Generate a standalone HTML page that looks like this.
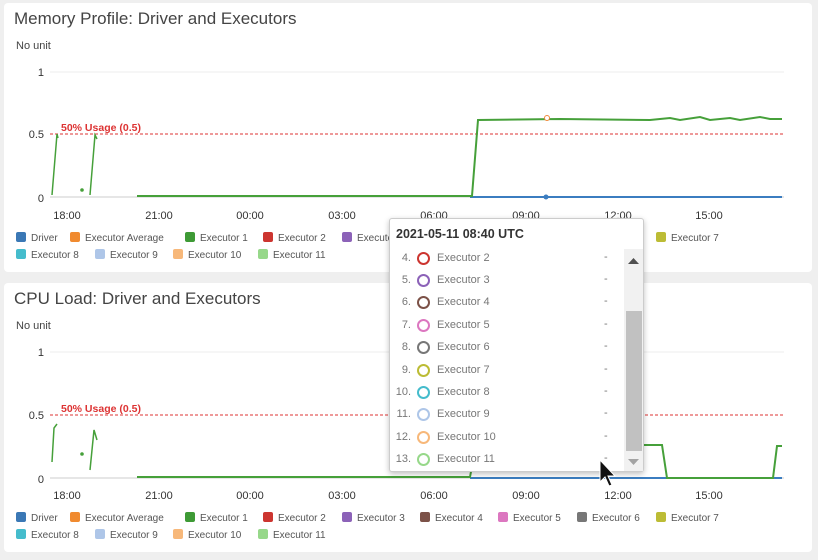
<!DOCTYPE html>
<html><head><meta charset="utf-8"><style>
*{margin:0;padding:0;box-sizing:border-box}
body{width:818px;height:560px;background:#efefef;font-family:"Liberation Sans",sans-serif;position:relative;overflow:hidden}
.panel{position:absolute;left:4px;width:808px;background:#fff;border-radius:4px}
.title{position:absolute;left:10px;font-size:17px;color:#444}
svg{position:absolute;left:0;top:0}
.tip{position:absolute;left:389px;top:218px;width:255px;height:254px;background:#fff;border:1px solid #ccc;border-radius:3px;box-shadow:0 2px 6px rgba(0,0,0,.25)}
.tip h4{position:absolute;left:6px;top:8px;font-size:12.5px;color:#333}
.row{position:absolute;left:0;width:235px;height:22px;font-size:11px;color:#777}
.row .n{position:absolute;right:214px;top:4px}
.row .c{position:absolute;left:27px;top:4px;width:13px;height:13px;border-radius:50%;border:2.5px solid}
.row .l{position:absolute;left:47px;top:4px}
.row .d{position:absolute;left:214px;top:3px}
.sb{position:absolute;left:234px;top:30px;width:19px;height:222px;background:#f1f1f1}
.th{position:absolute;left:2px;top:62px;width:16px;height:140px;background:#c1c1c1}
</style></head><body>
<div class="panel" style="top:3px;height:269px"></div>
<div class="panel" style="top:283px;height:269px"></div>
<div class="title" style="left:14px;top:9px">Memory Profile: Driver and Executors</div>
<div class="title" style="left:14px;top:289px">CPU Load: Driver and Executors</div>
<svg width="818" height="560" font-family="Liberation Sans, sans-serif">
<g id="c1">
<text x="16" y="49" font-size="11" fill="#444">No unit</text>
<line x1="50" y1="72" x2="784" y2="72" stroke="#eee"/>
<line x1="50" y1="197" x2="784" y2="197" stroke="#ccc"/>
<line x1="50" y1="134" x2="784" y2="134" stroke="#d33" stroke-dasharray="3,2"/>
<text x="61" y="131" font-size="10.5" fill="#d33" font-weight="bold">50% Usage (0.5)</text>
<g font-size="11" fill="#333" text-anchor="end"><text x="44" y="76">1</text><text x="44" y="138">0.5</text><text x="44" y="202">0</text></g>
<g font-size="11" fill="#333" text-anchor="middle"><text x="67" y="219">18:00</text><text x="159" y="219">21:00</text><text x="250" y="219">00:00</text><text x="342" y="219">03:00</text><text x="434" y="219">06:00</text><text x="526" y="219">09:00</text><text x="618" y="219">12:00</text><text x="709" y="219">15:00</text></g>
<polyline points="470,197 782,197" stroke="#3b7dc0" stroke-width="2" fill="none"/>
<polyline points="52,195 57,134 58,138" stroke="#46a03a" stroke-width="1.5" fill="none"/>
<polyline points="90,195 95,135 97,139" stroke="#46a03a" stroke-width="1.5" fill="none"/>
<circle cx="82" cy="190" r="1.8" fill="#46a03a"/>
<polyline points="137,196 472,196 478,120 560,119 650,120 670,118 680,120 700,117 710,120 730,118 740,120 760,117 770,119 782,119" stroke="#46a03a" stroke-width="2" fill="none"/>
<circle cx="547" cy="118" r="2.5" fill="#fff" stroke="#f0883a"/>
<circle cx="546" cy="197" r="2.5" fill="#3b7dc0"/>
</g>
<g transform="translate(0,280)">
<text x="16" y="49" font-size="11" fill="#444">No unit</text>
<line x1="50" y1="72" x2="784" y2="72" stroke="#eee"/>
<line x1="50" y1="198" x2="784" y2="198" stroke="#ccc"/>
<line x1="50" y1="135" x2="784" y2="135" stroke="#d33" stroke-dasharray="3,2"/>
<text x="61" y="132" font-size="10.5" fill="#d33" font-weight="bold">50% Usage (0.5)</text>
<g font-size="11" fill="#333" text-anchor="end"><text x="44" y="76">1</text><text x="44" y="139">0.5</text><text x="44" y="203">0</text></g>
<g font-size="11" fill="#333" text-anchor="middle"><text x="67" y="219">18:00</text><text x="159" y="219">21:00</text><text x="250" y="219">00:00</text><text x="342" y="219">03:00</text><text x="434" y="219">06:00</text><text x="526" y="219">09:00</text><text x="618" y="219">12:00</text><text x="709" y="219">15:00</text></g>
<polyline points="470,198 782,198" stroke="#3b7dc0" stroke-width="2" fill="none"/>
<polyline points="52,182 54,148 57,144" stroke="#46a03a" stroke-width="1.5" fill="none"/>
<polyline points="90,190 94,150 97,160" stroke="#46a03a" stroke-width="1.5" fill="none"/>
<circle cx="82" cy="174" r="1.8" fill="#46a03a"/>
<polyline points="137,197 470,197 476,165 662,165 667,198 773,198 777,166 782,166" stroke="#46a03a" stroke-width="2" fill="none"/>
</g>
<g font-size="10" fill="#555">
<g id="lg">
<rect x="16" y="232" width="10" height="10" rx="2" fill="#3b78b5"/><text x="31" y="241">Driver</text>
<rect x="70" y="232" width="10" height="10" rx="2" fill="#f08a2f"/><text x="85" y="241">Executor Average</text>
<rect x="185" y="232" width="10" height="10" rx="2" fill="#3e9a35"/><text x="200" y="241">Executor 1</text>
<rect x="263" y="232" width="10" height="10" rx="2" fill="#cc3530"/><text x="278" y="241">Executor 2</text>
<rect x="342" y="232" width="10" height="10" rx="2" fill="#8c62b8"/><text x="357" y="241">Executor 3</text>
<rect x="420" y="232" width="10" height="10" rx="2" fill="#7c5248"/><text x="435" y="241">Executor 4</text>
<rect x="498" y="232" width="10" height="10" rx="2" fill="#dc77c0"/><text x="513" y="241">Executor 5</text>
<rect x="577" y="232" width="10" height="10" rx="2" fill="#777"/><text x="592" y="241">Executor 6</text>
<rect x="656" y="232" width="10" height="10" rx="2" fill="#bcbc35"/><text x="671" y="241">Executor 7</text>
<rect x="16" y="249" width="10" height="10" rx="2" fill="#45bccc"/><text x="31" y="258">Executor 8</text>
<rect x="95" y="249" width="10" height="10" rx="2" fill="#aec6e8"/><text x="110" y="258">Executor 9</text>
<rect x="173" y="249" width="10" height="10" rx="2" fill="#f7b87a"/><text x="188" y="258">Executor 10</text>
<rect x="258" y="249" width="10" height="10" rx="2" fill="#97d88a"/><text x="273" y="258">Executor 11</text>
</g>
<use href="#lg" transform="translate(0,280)"/>
</g>
</svg>
<div class="tip"><h4>2021-05-11 08:40 UTC</h4>
<div class="row" style="top:29px"><span class="n">4.</span><span class="c" style="border-color:#cc3530"></span><span class="l">Executor 2</span><span class="d">-</span></div>
<div class="row" style="top:51px"><span class="n">5.</span><span class="c" style="border-color:#8c62b8"></span><span class="l">Executor 3</span><span class="d">-</span></div>
<div class="row" style="top:73px"><span class="n">6.</span><span class="c" style="border-color:#7c5248"></span><span class="l">Executor 4</span><span class="d">-</span></div>
<div class="row" style="top:96px"><span class="n">7.</span><span class="c" style="border-color:#dc77c0"></span><span class="l">Executor 5</span><span class="d">-</span></div>
<div class="row" style="top:118px"><span class="n">8.</span><span class="c" style="border-color:#777"></span><span class="l">Executor 6</span><span class="d">-</span></div>
<div class="row" style="top:141px"><span class="n">9.</span><span class="c" style="border-color:#bcbc35"></span><span class="l">Executor 7</span><span class="d">-</span></div>
<div class="row" style="top:163px"><span class="n">10.</span><span class="c" style="border-color:#45bccc"></span><span class="l">Executor 8</span><span class="d">-</span></div>
<div class="row" style="top:185px"><span class="n">11.</span><span class="c" style="border-color:#aec6e8"></span><span class="l">Executor 9</span><span class="d">-</span></div>
<div class="row" style="top:208px"><span class="n">12.</span><span class="c" style="border-color:#f7b87a"></span><span class="l">Executor 10</span><span class="d">-</span></div>
<div class="row" style="top:230px"><span class="n">13.</span><span class="c" style="border-color:#97d88a"></span><span class="l">Executor 11</span><span class="d">-</span></div>
<div class="sb"><div class="th"></div>
<svg width="19" height="222"><path d="M4,15 L15,15 L9.5,9 Z" fill="#505050"/><path d="M4,210 L15,210 L9.5,216 Z" fill="#a3a3a3"/></svg></div>
</div>
<svg width="818" height="560" style="pointer-events:none"><path d="M600,460 L600,482 L605,477 L609,486 L612,485 L608,476 L615,476 Z" fill="#111" stroke="#fff" stroke-width="1"/></svg>
</body></html>
